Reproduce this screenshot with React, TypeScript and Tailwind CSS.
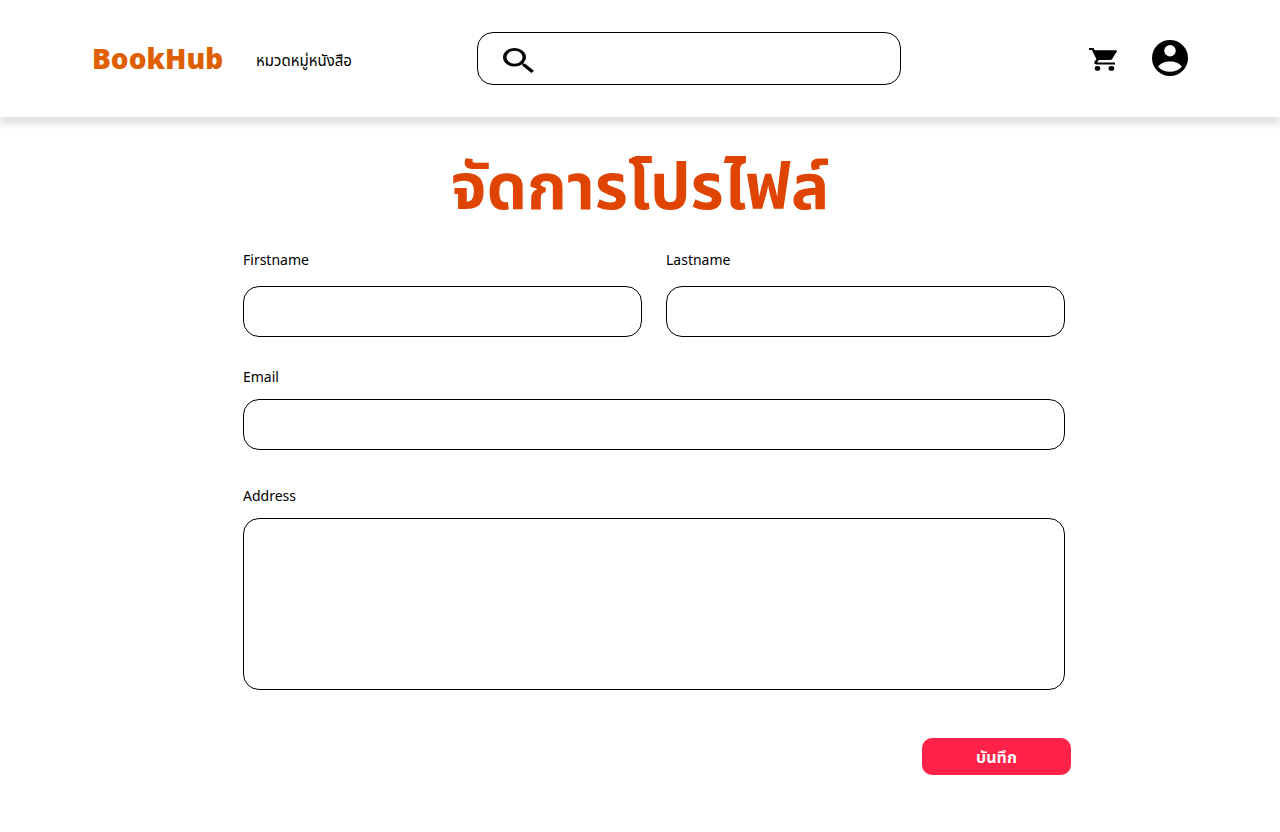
import React from "react";

const box =
  "block w-full rounded-2xl border border-black bg-white px-4 text-sm outline-none focus:ring-1 focus:ring-black";

function SearchIcon() {
  return (
    <svg viewBox="3 3 17.49 17.49" preserveAspectRatio="none" className="h-[25px] w-[31px] shrink-0" fill="currentColor" aria-hidden="true">
      <path d="M15.5 14h-.79l-.28-.27A6.47 6.47 0 0 0 16 9.5 6.5 6.5 0 1 0 9.5 16c1.61 0 3.09-.59 4.23-1.57l.27.28v.79l5 4.99L20.49 19l-4.99-5zm-6 0C7.01 14 5 11.99 5 9.5S7.01 5 9.5 5 14 7.01 14 9.5 11.99 14 9.5 14z" />
    </svg>
  );
}

function CartIcon() {
  return (
    <svg viewBox="0 0 28 23" className="h-[23px] w-7" fill="currentColor" aria-hidden="true">
      <path d="M0 0h4.500l1.300 2.200h21.200c.9 0 1.300.6.8 1.300l-4.700 7.500c-.4.700-1.100 1.100-2 1.100H9.700l-1.300 2.100c-.1.200 0 .3.300.3H26v2H7.700c-2 0-3-1.300-2.200-2.700L7.400 10.900 2.900 2H0z" />
      <ellipse cx="8.500" cy="20.400" rx="2.800" ry="2.300" />
      <ellipse cx="22.400" cy="20.400" rx="2.800" ry="2.300" />
    </svg>
  );
}

function AccountIcon() {
  return (
    <svg viewBox="2 2 20 20" className="size-9" fill="currentColor" aria-hidden="true">
      <path fillRule="evenodd" d="M12 2a10 10 0 1 0 0 20 10 10 0 0 0 0-20zm0 2.800a3.200 3.200 0 1 1 0 6.400 3.200 3.200 0 0 1 0-6.400zm0 14.900c-2.600 0-5-1.100-6.600-2.900C6.700 15 9.200 14 12 14s5.300 1 6.600 2.800c-1.600 1.800-4 2.900-6.600 2.900z" />
    </svg>
  );
}

export default function App() {
  return (
    <div className="min-h-screen bg-white font-['Noto_Sans','Noto_Sans_Thai',sans-serif] text-black">
      <header className="flex items-center bg-white py-8 pr-[92px] pl-[92px] shadow-[0_8px_6px_rgba(0,0,0,0.11)]">
        <a href="#" className="w-[134px] pb-0.5 text-[28px] leading-8 font-black text-[#df5f00]">
          BookHub
        </a>
        <a href="#" className="ml-[30px] pt-0.5 text-[15px] leading-6">หมวดหมู่หนังสือ</a>
        <label className="ml-[125px] flex h-[53px] w-[424px] items-center rounded-2xl border border-black pt-1 pl-[25px]">
          <SearchIcon />
          <input type="search" aria-label="ค้นหา" className="min-w-0 flex-1 bg-transparent px-3 text-sm outline-none" />
        </label>
        <div className="ml-auto flex items-center gap-[35px]">
          <button type="button" aria-label="Cart" className="flex pt-0.5"><CartIcon /></button>
          <button type="button" aria-label="Account" className="flex pb-0.5"><AccountIcon /></button>
        </div>
      </header>

      <main className="px-6 pt-5 pb-14">
        <h1 className="text-center text-[64px] leading-[96px] font-bold text-[#e04403]">จัดการโปรไฟล์</h1>
        <form className="mx-auto max-w-[850px] pt-[17px] pl-7">
          <div className="grid grid-cols-2 gap-x-6">
            <div>
              <label htmlFor="firstname" className="block text-sm leading-5">Firstname</label>
              <input id="firstname" type="text" className={`${box} mt-4 h-[51px]`} />
            </div>
            <div>
              <label htmlFor="lastname" className="block text-sm leading-5">Lastname</label>
              <input id="lastname" type="text" className={`${box} mt-4 h-[51px]`} />
            </div>
          </div>
          <label htmlFor="email" className="mt-[30px] block text-sm leading-5">Email</label>
          <input id="email" type="email" className={`${box} mt-3 h-[51px]`} />
          <label htmlFor="address" className="mt-9 block text-sm leading-5">Address</label>
          <textarea id="address" className={`${box} mt-3 h-[172px] resize-none py-3`} />
          <div className="-mr-1.5 mt-12 flex justify-end">
            <button type="submit" className="h-[37px] w-[149px] rounded-[10px] bg-[#ff2147] text-base font-bold text-white">
              บันทึก
            </button>
          </div>
        </form>
      </main>
    </div>
  );
}
